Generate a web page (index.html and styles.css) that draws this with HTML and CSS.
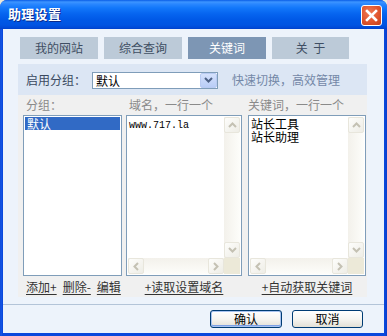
FILE: index.html
```html
<!DOCTYPE html>
<html lang="zh-CN">
<head>
<meta charset="utf-8">
<title>助理设置</title>
<link rel="stylesheet" href="styles.css">
</head>
<body>
<div class="window">
  <div class="titlebar">
    <span class="title">助理设置</span>
    <span class="close"><svg width="21" height="21" viewBox="0 0 21 21"><path d="M6 6 L15 15 M15 6 L6 15" stroke="#fff" stroke-width="2.6" stroke-linecap="square"/></svg></span>
  </div>
  <div class="frame">
    <div class="tabs">
      <div class="tab">我的网站</div>
      <div class="tab">综合查询</div>
      <div class="tab active">关键词</div>
      <div class="tab">关&nbsp;&nbsp;于</div>
    </div>
    <div class="panel">
      <div class="band">
        <span class="band-label">启用分组：</span>
        <div class="combo">
          <span class="combo-text">默认</span>
          <span class="combo-btn"><svg width="9" height="6" viewBox="0 0 9 6"><path d="M1 1 L4.5 4.5 L8 1" fill="none" stroke="#4D6185" stroke-width="2"/></svg></span>
        </div>
        <span class="hint">快速切换，高效管理</span>
      </div>
      <div class="content">
        <div class="col col-groups">
          <div class="label">分组：</div>
          <div class="box list"><div class="item selected">默认</div></div>
          <div class="links links-left"><a class="link">添加+</a><a class="link">删除-</a><a class="link">编辑</a></div>
        </div>
        <div class="col col-domains">
          <div class="label label-domains">域名，一行一个</div>
          <div class="box scrollbox">
            <div class="text mono">www.717.la</div>
            <div class="vscroll">
              <span class="sbtn"><svg width="9" height="6" viewBox="0 0 9 6"><path d="M1 5 L4.5 1.5 L8 5" fill="none" stroke="#C4C1B3" stroke-width="2"/></svg></span>
              <span class="vtrack"></span>
              <span class="sbtn"><svg width="9" height="6" viewBox="0 0 9 6"><path d="M1 1 L4.5 4.5 L8 1" fill="none" stroke="#C4C1B3" stroke-width="2"/></svg></span>
            </div>
            <div class="hscroll">
              <span class="sbtn"><svg width="6" height="9" viewBox="0 0 6 9"><path d="M5 1 L1.5 4.5 L5 8" fill="none" stroke="#C4C1B3" stroke-width="2"/></svg></span>
              <span class="htrack"></span>
              <span class="sbtn"><svg width="6" height="9" viewBox="0 0 6 9"><path d="M1 1 L4.5 4.5 L1 8" fill="none" stroke="#C4C1B3" stroke-width="2"/></svg></span>
            </div>
            <div class="corner"></div>
          </div>
          <div class="links links-center"><a class="link">+读取设置域名</a></div>
        </div>
        <div class="col col-keywords">
          <div class="label label-keywords">关键词，一行一个</div>
          <div class="box scrollbox">
            <div class="text cjk"><div class="kw">站长工具</div><div class="kw">站长助理</div></div>
            <div class="vscroll">
              <span class="sbtn"><svg width="9" height="6" viewBox="0 0 9 6"><path d="M1 5 L4.5 1.5 L8 5" fill="none" stroke="#C4C1B3" stroke-width="2"/></svg></span>
              <span class="vtrack"></span>
              <span class="sbtn"><svg width="9" height="6" viewBox="0 0 9 6"><path d="M1 1 L4.5 4.5 L8 1" fill="none" stroke="#C4C1B3" stroke-width="2"/></svg></span>
            </div>
            <div class="hscroll">
              <span class="sbtn"><svg width="6" height="9" viewBox="0 0 6 9"><path d="M5 1 L1.5 4.5 L5 8" fill="none" stroke="#C4C1B3" stroke-width="2"/></svg></span>
              <span class="htrack"></span>
              <span class="sbtn"><svg width="6" height="9" viewBox="0 0 6 9"><path d="M1 1 L4.5 4.5 L1 8" fill="none" stroke="#C4C1B3" stroke-width="2"/></svg></span>
            </div>
            <div class="corner"></div>
          </div>
          <div class="links links-center"><a class="link">+自动获取关键词</a></div>
        </div>
      </div>
    </div>
    <div class="sep"></div>
    <div class="buttons">
      <button class="btn default">确认</button>
      <button class="btn">取消</button>
    </div>
  </div>
</div>
</body>
</html>
```

FILE: styles.css
```css
* { box-sizing: border-box; }
html, body { margin: 0; padding: 0; }
body {
  width: 387px;
  height: 336px;
  overflow: hidden;
  background: #ECE9D8;
  font-family: "Noto Sans CJK SC", "Liberation Sans", sans-serif;
  font-size: 12px;
}
.window {
  width: 387px;
  height: 336px;
  display: flex;
  flex-direction: column;
  border-radius: 7px 7px 0 0;
  overflow: hidden;
  background: linear-gradient(to right, #0A3FCF 0, #1A5EEB 1px, #0A48DC 2px, #0A48DC 385px, #0A3CC8 387px);
}
.titlebar {
  flex: none;
  height: 29px;
  display: flex;
  justify-content: space-between;
  align-items: flex-start;
  padding: 0 5px 0 8px;
  background: linear-gradient(to bottom, #0A5DE6 0, #3D95FF 2px, #2A87FF 4px, #1277FA 8px, #0664EF 14px, #0058E6 20px, #0054E2 25px, #0048D6 28px, #0040C8 29px);
}
.title {
  margin-top: 5px;
  line-height: 18px;
  color: #fff;
  font-weight: bold;
  font-size: 13px;
  letter-spacing: 0.3px;
  text-shadow: 1px 1px 0 #0B2A8A;
}
.close {
  margin-top: 5px;
  width: 21px;
  height: 21px;
  border: 1px solid #fff;
  border-radius: 3px;
  background: radial-gradient(circle at 40% 35%, #F07A55 0, #E0552E 55%, #C2401C 100%);
  display: flex;
  align-items: center;
  justify-content: center;
}
.close svg { display: block; margin: -1px; }
.frame {
  flex: 1;
  margin: 0 3px 3px;
  background: #EDF3FB;
  display: flex;
  flex-direction: column;
}
.tabs {
  display: flex;
  gap: 6px;
  margin-top: 8px;
  padding-left: 17px;
  height: 22px;
}
.tab {
  width: 78px;
  height: 22px;
  background: #BCCAD8;
  color: #3F4E63;
  display: flex;
  align-items: center;
  justify-content: center;
  line-height: 22px;
}
.tab:last-child { width: 77px; }
.tab.active {
  background: #7D96B4;
  color: #fff;
}
.panel {
  margin: 5px 0 0 15px;
  width: 349px;
  height: 233px;
  display: flex;
  flex-direction: column;
}
.band {
  height: 31px;
  flex: none;
  background: #DCE6F4;
  display: flex;
  align-items: center;
  padding-left: 8px;
}
.band-label {
  color: #3A4960;
  width: 66px;
}
.combo {
  width: 126px;
  height: 17px;
  border: 1px solid #7F9DB9;
  background: #fff;
  display: flex;
  align-items: center;
  justify-content: space-between;
  margin-top: 1px;
}
.combo-text {
  padding-left: 3px;
  color: #000;
  line-height: 15px;
}
.combo-btn {
  width: 17px;
  height: 15px;
  border: 1px solid #B9CBF2;
  border-radius: 2px;
  background: linear-gradient(to bottom, #D5E1FC, #B9CDF7);
  display: flex;
  align-items: center;
  justify-content: center;
}
.hint {
  margin-left: 14px;
  color: #7488A7;
}
.content {
  flex: 1;
  background: #F0F0F0;
  display: flex;
  padding-left: 5px;
}
.col {
  display: flex;
  flex-direction: column;
}
.col-groups { width: 99px; }
.col-domains { width: 116px; margin-left: 4px; }
.col-keywords { width: 118px; margin-left: 6px; }
.label {
  height: 20px;
  line-height: 20px;
  color: #8A8A8A;
  padding-left: 3px;
}
.label-domains { padding-left: 3px; }
.label-keywords { padding-left: 0; }
.box {
  height: 161px;
  border: 1px solid #7F9DB9;
  background: #fff;
  padding: 1px;
}
.item {
  height: 13px;
  line-height: 13px;
  padding-left: 2px;
  color: #000;
}
.item.selected {
  background: #316AC5;
  color: #fff;
}
.scrollbox {
  display: grid;
  grid-template-columns: 1fr 16px;
  grid-template-rows: 1fr 16px;
}
.text {
  padding: 1px 0 0 1px;
  color: #000;
}
.mono {
  font-family: "Liberation Mono", "DejaVu Sans Mono", monospace;
  font-size: 10px;
  line-height: 14px;
  padding-top: 2px;
}
.cjk {
  font-size: 12px;
  padding-top: 0;
}
.kw {
  height: 13px;
  line-height: 13px;
}
.vscroll {
  display: flex;
  flex-direction: column;
  background: linear-gradient(to right, #F3F1EB, #FDFDFA);
}
.vtrack { flex: 1; }
.hscroll {
  display: flex;
  background: linear-gradient(to bottom, #F3F1EB, #FDFDFA);
}
.htrack { flex: 1; }
.sbtn {
  flex: none;
  width: 16px;
  height: 16px;
  border: 1px solid #E8E6DC;
  border-radius: 2px;
  background: linear-gradient(135deg, #FDFDFB, #EEEDE6);
  display: flex;
  align-items: center;
  justify-content: center;
}
.corner { background: #ECE9D8; }
.links {
  height: 21px;
  line-height: 21px;
  display: flex;
}
.links-left { padding-left: 3px; gap: 6px; }
.links-center { justify-content: center; }
.link {
  color: #333;
  text-decoration: underline;
  text-underline-offset: 2px;
}
.sep {
  margin-top: 7px;
  height: 1px;
  background: #B3C4D8;
}
.buttons {
  display: flex;
  justify-content: flex-end;
  gap: 10px;
  padding-right: 21px;
  margin-top: 5px;
}
.btn {
  width: 72px;
  height: 18px;
  padding: 0;
  border: 1px solid #003C74;
  border-radius: 3px;
  background: linear-gradient(to bottom, #FFFFFF 0, #F6F5F1 50%, #E3E0D6 100%);
  font-family: "Noto Sans CJK SC", "Liberation Sans", sans-serif;
  font-size: 12px;
  line-height: 16px;
  color: #000;
}
.btn + .btn { width: 71px; }
.btn.default {
  box-shadow: inset 0 0 0 1px #A9C4F0, inset 0 -1px 0 1px #7CA0E6;
}
```
